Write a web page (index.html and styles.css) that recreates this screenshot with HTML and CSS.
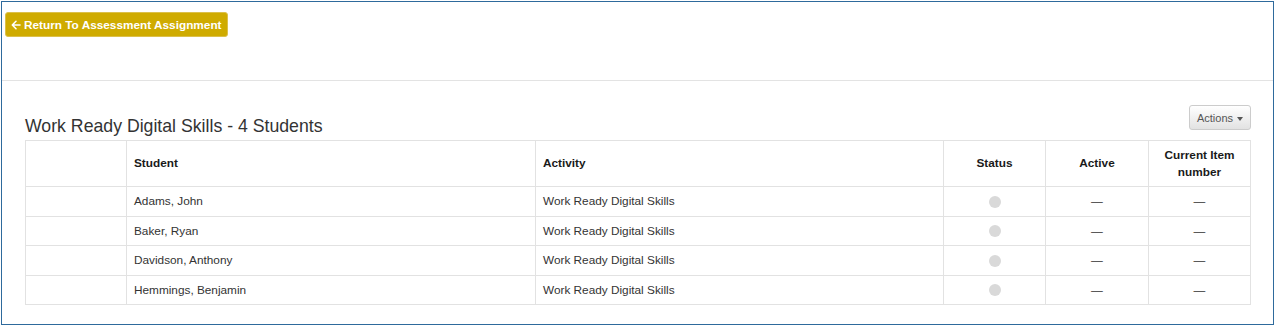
FILE: index.html
```html
<!DOCTYPE html>
<html>
<head>
<meta charset="utf-8">
<link rel="stylesheet" href="styles.css">
</head>
<body>
<div class="frame">
  <div class="topbar">
    <button class="return-btn">
      <svg class="arrow" width="10" height="10" viewBox="0 0 10 10"><path d="M9 5H1.5M5 1.3L1.3 5L5 8.7" fill="none" stroke="#fff" stroke-width="1.6" stroke-linecap="round" stroke-linejoin="round"/></svg>
      Return To Assessment Assignment
    </button>
  </div>
  <div class="panel">
    <div class="toolbar">
      <h2 class="title">Work Ready Digital Skills - 4 Students</h2>
      <button class="actions-btn">Actions <span class="caret"></span></button>
    </div>
    <table class="grid">
      <colgroup>
        <col style="width:101px"><col style="width:409px"><col style="width:408px"><col style="width:102px"><col style="width:103px"><col style="width:102px">
      </colgroup>
      <thead>
        <tr><th></th><th>Student</th><th>Activity</th><th class="c">Status</th><th class="c">Active</th><th class="c">Current Item<br>number</th></tr>
      </thead>
      <tbody>
        <tr><td></td><td>Adams, John</td><td>Work Ready Digital Skills</td><td class="c"><span class="dot"></span></td><td class="c">—</td><td class="c">—</td></tr>
        <tr><td></td><td>Baker, Ryan</td><td>Work Ready Digital Skills</td><td class="c"><span class="dot"></span></td><td class="c">—</td><td class="c">—</td></tr>
        <tr><td></td><td>Davidson, Anthony</td><td>Work Ready Digital Skills</td><td class="c"><span class="dot"></span></td><td class="c">—</td><td class="c">—</td></tr>
        <tr><td></td><td>Hemmings, Benjamin</td><td>Work Ready Digital Skills</td><td class="c"><span class="dot"></span></td><td class="c">—</td><td class="c">—</td></tr>
      </tbody>
    </table>
  </div>
</div>
</body>
</html>
```
FILE: styles.css
```css
html, body {
  margin: 0;
  padding: 0;
  background: #fff;
}
body {
  font-family: "Liberation Sans", Arial, sans-serif;
  color: #333;
}
.frame {
  margin: 1px 2px 1px 1px;
  width: 1271px;
  height: 322px;
  border: 1px solid #2e6a9c;
  overflow: hidden;
}
.topbar {
  height: 79px;
  border-bottom: 1px solid #e3e3e3;
  padding: 10px 0 0 3px;
  box-sizing: border-box;
}
.return-btn {
  display: inline-flex;
  align-items: center;
  gap: 3px;
  height: 25px;
  width: 223px;
  padding: 0 0 0 5px;
  background: #cfab00;
  border: 1px solid #dcc04a;
  border-radius: 3px;
  color: #fff;
  font-family: "Liberation Sans", Arial, sans-serif;
  font-weight: bold;
  font-size: 11.8px;
  box-sizing: border-box;
  cursor: pointer;
}
.arrow { display: block; }
.panel {
  padding: 24px 22px 18px 23px;
}
.toolbar {
  display: flex;
  justify-content: space-between;
  align-items: flex-end;
}
.title {
  margin: 0 0 3px 0;
  font-size: 17.7px;
  font-weight: normal;
  line-height: 22px;
  color: #333;
}
.actions-btn {
  height: 25px;
  width: 62px;
  margin-bottom: 10px;
  padding: 0;
  font-family: "Liberation Sans", Arial, sans-serif;
  font-size: 11px;
  color: #555;
  border: 1px solid #ccc;
  border-radius: 3px;
  background: linear-gradient(#fff, #e2e2e2);
  box-sizing: border-box;
}
.caret {
  display: inline-block;
  width: 0;
  height: 0;
  margin-left: 1px;
  vertical-align: middle;
  border-top: 4px solid #555;
  border-left: 3px solid transparent;
  border-right: 3px solid transparent;
}
.grid {
  width: 1225px;
  border-collapse: collapse;
  table-layout: fixed;
  font-size: 11.8px;
}
.grid th, .grid td {
  border: 1px solid #e2e2e2;
  padding: 6px 7px;
  line-height: 16.5px;
  text-align: left;
  vertical-align: middle;
}
.grid th {
  font-weight: bold;
  color: #1a1a1a;
}
.grid .c { text-align: center; }
.dot {
  display: inline-block;
  width: 12px;
  height: 12px;
  border-radius: 50%;
  background: #d9d9d9;
  vertical-align: middle;
}
```
